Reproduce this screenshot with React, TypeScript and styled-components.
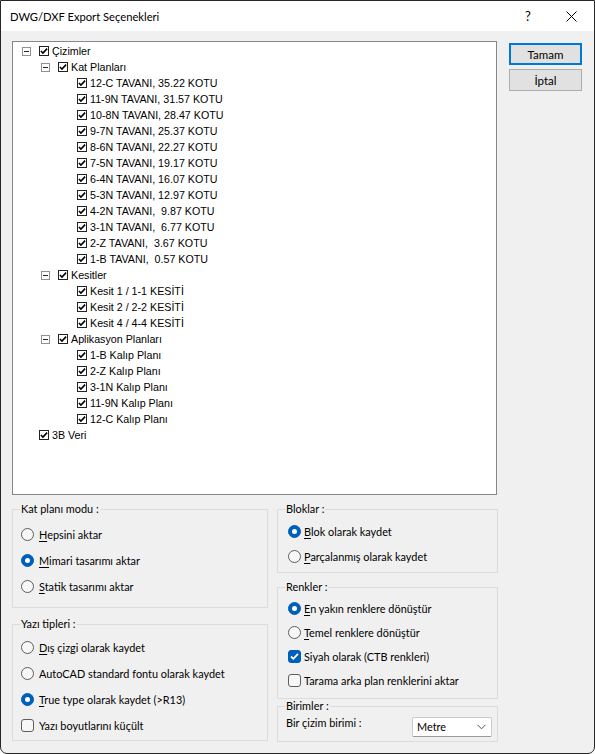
import styled, { createGlobalStyle } from 'styled-components';

const GlobalStyle = createGlobalStyle`
  html, body { margin: 0; padding: 0; background: #ffffff; }
  * { box-sizing: border-box; }
`;

type TreeNode = { label: string; level: number; expandable?: boolean };

const treeRows: TreeNode[] = [
  { label: 'Çizimler', level: 0, expandable: true },
  { label: 'Kat Planları', level: 1, expandable: true },
  { label: '12-C TAVANI, 35.22 KOTU', level: 2 },
  { label: '11-9N TAVANI, 31.57 KOTU', level: 2 },
  { label: '10-8N TAVANI, 28.47 KOTU', level: 2 },
  { label: '9-7N TAVANI, 25.37 KOTU', level: 2 },
  { label: '8-6N TAVANI, 22.27 KOTU', level: 2 },
  { label: '7-5N TAVANI, 19.17 KOTU', level: 2 },
  { label: '6-4N TAVANI, 16.07 KOTU', level: 2 },
  { label: '5-3N TAVANI, 12.97 KOTU', level: 2 },
  { label: '4-2N TAVANI,  9.87 KOTU', level: 2 },
  { label: '3-1N TAVANI,  6.77 KOTU', level: 2 },
  { label: '2-Z TAVANI,  3.67 KOTU', level: 2 },
  { label: '1-B TAVANI,  0.57 KOTU', level: 2 },
  { label: 'Kesitler', level: 1, expandable: true },
  { label: 'Kesit 1 / 1-1 KESİTİ', level: 2 },
  { label: 'Kesit 2 / 2-2 KESİTİ', level: 2 },
  { label: 'Kesit 4 / 4-4 KESİTİ', level: 2 },
  { label: 'Aplikasyon Planları', level: 1, expandable: true },
  { label: '1-B Kalıp Planı', level: 2 },
  { label: '2-Z Kalıp Planı', level: 2 },
  { label: '3-1N Kalıp Planı', level: 2 },
  { label: '11-9N Kalıp Planı', level: 2 },
  { label: '12-C Kalıp Planı', level: 2 },
  { label: '3B Veri', level: 0 },
];

// mnemonic harfi altı çizili gösterilir
const Mnemonic = ({ text, u }: { text: string; u?: boolean }) =>
  u ? (
    <>
      <Underline>{text[0]}</Underline>
      {text.slice(1)}
    </>
  ) : (
    <>{text}</>
  );

const CheckMark = ({ color, size }: { color: string; size: number }) => (
  <svg width={size} height={size} viewBox="0 0 9 9">
    <polyline points="1,4.5 3.3,6.8 8,1.8" fill="none" stroke={color} strokeWidth="1.8" />
  </svg>
);

const Radio = ({ label, checked, u }: { label: string; checked?: boolean; u?: boolean }) => (
  <Option>
    <RadioCircle $checked={!!checked} />
    <span>
      <Mnemonic text={label} u={u} />
    </span>
  </Option>
);

const Check = ({ label, checked }: { label: string; checked?: boolean }) => (
  <Option>
    <CheckBox $checked={!!checked}>{checked && <CheckMark color="#fff" size={9} />}</CheckBox>
    <span>{label}</span>
  </Option>
);

const App = () => {
  return (
    <>
      <GlobalStyle />
      <Window>
        <TitleBar>
          <Title>DWG/DXF Export Seçenekleri</Title>
          <HelpButton>?</HelpButton>
          <CloseButton>
            <svg width="11" height="11" viewBox="0 0 11 11">
              <path d="M0.5 0.5 L10.5 10.5 M10.5 0.5 L0.5 10.5" stroke="#000" strokeWidth="1" />
            </svg>
          </CloseButton>
        </TitleBar>
        <Body>
          <TopRow>
            <TreeBox>
              {treeRows.map((row) => (
                <TreeRow key={row.label} $level={row.level}>
                  <ExpanderSlot>{row.expandable && <Expander />}</ExpanderSlot>
                  <TreeCheck>
                    <CheckMark color="#000" size={8} />
                  </TreeCheck>
                  <TreeLabel>{row.label}</TreeLabel>
                </TreeRow>
              ))}
            </TreeBox>
            <ButtonColumn>
              <DialogButton $primary>Tamam</DialogButton>
              <DialogButton>İptal</DialogButton>
            </ButtonColumn>
          </TopRow>
          <Groups>
            <Column>
              <Group $height={106}>
                <Legend>Kat planı modu :</Legend>
                <Options $top={5} $row={26} $indent={8} $gap={5}>
                  <Radio label="Hepsini aktar" u />
                  <Radio label="Mimari tasarımı aktar" checked u />
                  <Radio label="Statik tasarımı aktar" u />
                </Options>
              </Group>
              <Group $height={124} $mt={9}>
                <Legend>Yazı tipleri :</Legend>
                <Options $top={3} $row={26} $indent={8} $gap={5}>
                  <Radio label="Dış çizgi olarak kaydet" u />
                  <Radio label="AutoCAD standard fontu olarak kaydet" />
                  <Radio label="True type olarak kaydet (>R13)" checked u />
                  <Check label="Yazı boyutlarını küçült" />
                </Options>
              </Group>
            </Column>
            <Column>
              <Group $height={71}>
                <Legend>Bloklar :</Legend>
                <Options $top={3} $row={25} $indent={10} $gap={3}>
                  <Radio label="Blok olarak kaydet" checked u />
                  <Radio label="Parçalanmış olarak kaydet" u />
                </Options>
              </Group>
              <Group $height={119} $mt={7}>
                <Legend>Renkler :</Legend>
                <Options $top={2} $row={24} $indent={10} $gap={3}>
                  <Radio label="En yakın renklere dönüştür" checked u />
                  <Radio label="Temel renklere dönüştür" u />
                  <Check label="Siyah olarak (CTB renkleri)" checked />
                  <Check label="Tarama arka plan renklerini aktar" />
                </Options>
              </Group>
              <Group $height={43}>
                <Legend>Birimler :</Legend>
                <UnitRow>
                  <span>Bir çizim birimi :</span>
                  <Select>
                    <span>Metre</span>
                    <svg width="9" height="6" viewBox="0 0 9 6">
                      <polyline points="0.5,0.8 4.5,4.8 8.5,0.8" fill="none" stroke="#555" strokeWidth="1" />
                    </svg>
                  </Select>
                </UnitRow>
              </Group>
            </Column>
          </Groups>
        </Body>
      </Window>
    </>
  );
};

export default App;

const uiFont = `'Lato', 'Noto Sans', sans-serif`;

const Window = styled.div`
  width: 595px;
  height: 754px;
  border: 1px solid #262626;
  border-radius: 0 0 7px 7px;
  overflow: hidden;
  display: flex;
  flex-direction: column;
  background: #f0f0f0;
  font-family: ${uiFont};
  font-size: 10.9px;
  color: #000;
`;

const TitleBar = styled.div`
  height: 30px;
  background: #ffffff;
  display: flex;
  align-items: center;
  padding-left: 9px;
`;

const Title = styled.span`
  font-size: 11.2px;
  flex: 1;
`;

const HelpButton = styled.span`
  width: 46px;
  text-align: center;
  font-size: 13px;
  margin-right: -3px;
`;

const CloseButton = styled.span`
  width: 46px;
  height: 30px;
  display: flex;
  align-items: center;
  justify-content: center;
`;

const Body = styled.div`
  flex: 1;
  padding: 10px 11px 0;
  display: flex;
  flex-direction: column;
`;

const TopRow = styled.div`
  display: flex;
  align-items: flex-start;
`;

const TreeBox = styled.div`
  width: 485px;
  height: 454px;
  background: #ffffff;
  border: 1px solid #828790;
  padding-top: 1px;
  font-family: 'Liberation Sans', Arial, sans-serif;
  font-size: 10.7px;
`;

const TreeRow = styled.div<{ $level: number }>`
  height: 16px;
  display: flex;
  align-items: center;
  padding-left: ${({ $level }) => 9 + $level * 19}px;
`;

const ExpanderSlot = styled.span`
  width: 17px;
  height: 9px;
  flex: none;
`;

const Expander = styled.span`
  display: block;
  position: relative;
  width: 9px;
  height: 9px;
  border: 1px solid #919191;
  background: #fff;
  &::after {
    content: '';
    position: absolute;
    left: 1px;
    top: 3px;
    width: 5px;
    height: 1px;
    background: #222;
  }
`;

const TreeCheck = styled.span`
  width: 10px;
  height: 10px;
  flex: none;
  border: 1px solid #222;
  background: #fff;
  display: flex;
  align-items: center;
  justify-content: center;
`;

const TreeLabel = styled.span`
  white-space: pre;
  margin-left: 3px;
  line-height: 14px;
`;

const ButtonColumn = styled.div`
  margin: 2px 0 0 12px;
  display: flex;
  flex-direction: column;
  gap: 4px;
`;

const DialogButton = styled.div<{ $primary?: boolean }>`
  width: 73px;
  height: 22px;
  display: flex;
  align-items: center;
  justify-content: center;
  font-size: 11.5px;
  background: #e1e1e1;
  border: ${({ $primary }) => ($primary ? '2px solid #0078d7' : '1px solid #adadad')};
`;

const Groups = styled.div`
  margin-top: 7px;
  display: grid;
  grid-template-columns: 256px 221px;
  column-gap: 9px;
`;

const Column = styled.div`
  display: flex;
  flex-direction: column;
`;

const Group = styled.fieldset<{ $height: number; $mt?: number }>`
  margin: ${({ $mt }) => $mt ?? 0}px 0 0;
  padding: 0;
  min-width: 0;
  height: ${({ $height }) => $height}px;
  border: 1px solid #dcdcdc;
`;

const Legend = styled.legend`
  margin-left: 7px;
  padding: 0 1px;
  line-height: 14px;
`;

const Options = styled.div<{ $top: number; $row: number; $indent: number; $gap: number }>`
  padding: ${({ $top }) => $top}px 0 0 ${({ $indent }) => $indent}px;
  display: grid;
  grid-auto-rows: ${({ $row }) => $row}px;
  --gap: ${({ $gap }) => $gap}px;
`;

const Option = styled.div`
  display: flex;
  align-items: center;
  gap: var(--gap);
  white-space: nowrap;
`;

const Underline = styled.span`
  text-decoration: underline;
  text-underline-offset: 2px;
`;

const RadioCircle = styled.span<{ $checked: boolean }>`
  width: 13px;
  height: 13px;
  flex: none;
  border-radius: 50%;
  border: 1px solid ${({ $checked }) => ($checked ? '#005fb8' : '#5d5d5d')};
  background: ${({ $checked }) => ($checked ? '#005fb8' : '#f7f7f7')};
  display: flex;
  align-items: center;
  justify-content: center;
  &::after {
    content: '';
    width: 5px;
    height: 5px;
    border-radius: 50%;
    background: #ffffff;
    display: ${({ $checked }) => ($checked ? 'block' : 'none')};
  }
`;

const CheckBox = styled.span<{ $checked: boolean }>`
  width: 13px;
  height: 13px;
  flex: none;
  border-radius: 3px;
  border: 1px solid ${({ $checked }) => ($checked ? '#005fb8' : '#5d5d5d')};
  background: ${({ $checked }) => ($checked ? '#005fb8' : '#f7f7f7')};
  display: flex;
  align-items: center;
  justify-content: center;
`;

const UnitRow = styled.div`
  padding: 3px 5px 0 8px;
  display: flex;
  justify-content: space-between;
  align-items: flex-start;
  line-height: 14px;
`;

const Select = styled.div`
  margin-top: 1px;
  width: 80px;
  height: 20px;
  background: #ffffff;
  border: 1px solid #cccccc;
  border-bottom-color: #9a9a9a;
  border-radius: 2px;
  display: flex;
  align-items: center;
  justify-content: space-between;
  padding: 0 5px 0 4px;
`;
